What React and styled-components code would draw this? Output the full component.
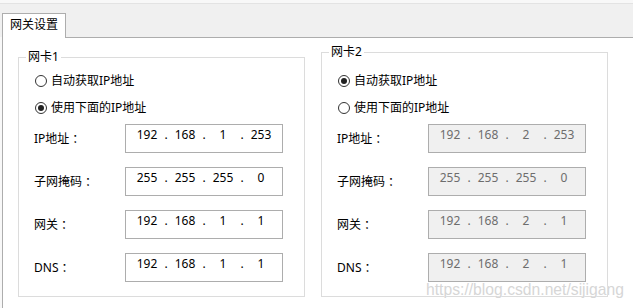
import React from 'react'
import styled, { createGlobalStyle } from 'styled-components'

const GlobalStyle = createGlobalStyle`
    body {
        margin: 0;
        background: #fff;
        font-family: "Noto Sans", "Noto Sans CJK SC", sans-serif;
        font-size: 12px;
        color: #000;
    }
`

const Window = styled.div`
    position: relative;
    width: 633px;
    height: 308px;
    overflow: hidden;
    background: #f8f8f8;
    padding-top: 3px;
    box-sizing: border-box;
    display: flex;
    flex-direction: column;
`

const TabStrip = styled.div`
    height: 34px;
    box-sizing: border-box;
    border-top: 1px solid #e3e3e3;
    background: #f0f0f0;
    display: flex;
    align-items: flex-end;
    padding-left: 2px;
`

const Tab = styled.div`
    position: relative;
    z-index: 1;
    width: 64px;
    height: 25px;
    margin-bottom: -1px;
    box-sizing: border-box;
    border: 1px solid #adadad;
    border-bottom: none;
    background: #fff;
    padding: 3px 0 0 7px;
    line-height: 16px;
`

const Page = styled.div`
    flex: 1;
    margin-left: 2px;
    border-top: 1px solid #adadad;
    border-left: 1px solid #adadad;
    background: #fff;
    display: flex;
    align-items: flex-start;
    gap: 16px;
    padding-left: 15px;
`

const GroupBox = styled.div`
    position: relative;
    width: 287px;
    box-sizing: border-box;
    margin-top: ${p => p.$top}px;
    padding: ${p => p.$padTop}px 0 14px 0;
    border: 1px solid #dcdcdc;
`

const Legend = styled.span`
    position: absolute;
    top: -9px;
    left: 7px;
    padding: 0 2px;
    background: #fff;
    line-height: 16px;
`

const RadioRow = styled.label`
    height: 27px;
    display: flex;
    align-items: center;
    gap: 4px;
    padding-left: 16px;
    line-height: 16px;
`

const RadioMark = styled.span`
    position: relative;
    width: 12px;
    height: 12px;
    box-sizing: border-box;
    border: 1px solid #333;
    border-radius: 50%;
    background: #fff;

    &::after {
        content: '';
        display: ${p => (p.$checked ? 'block' : 'none')};
        position: absolute;
        left: 2px;
        top: 2px;
        width: 6px;
        height: 6px;
        border-radius: 50%;
        background: #222;
    }
`

const Fields = styled.div`
    margin-top: 3px;
    display: flex;
    flex-direction: column;
    gap: 14px;
`

const FieldRow = styled.div`
    display: flex;
    align-items: center;
    padding-left: 15px;
`

const FieldLabel = styled.span`
    width: 91px;
    line-height: 16px;
    margin-top: 1px;
`

const Colon = styled.span`
    margin-left: 3px;
`

const IpBox = styled.div`
    width: 158px;
    height: 29px;
    box-sizing: border-box;
    border: 1px solid #adadad;
    background: ${p => (p.$disabled ? '#f0f0f0' : '#fff')};
    color: ${p => (p.$disabled ? '#6d6d6d' : '#000')};
    display: flex;
    align-items: flex-start;
    padding: 2px 0 0 5px;
    line-height: 16px;
`

const Octet = styled.span`
    width: 32px;
    text-align: center;
`

const Dot = styled.span`
    width: 6px;
    text-align: center;
`

const Watermark = styled.div`
    position: absolute;
    right: 9px;
    bottom: 9px;
    font-family: "Liberation Sans", Arial, sans-serif;
    font-size: 15.7px;
    line-height: 18px;
    color: #d6d6d6;
    text-shadow: 0 0 1px #fff;
    pointer-events: none;
`

function IpField({ value, disabled }) {
    const parts = value.split('.')
    return (
        <IpBox $disabled={disabled}>
            {parts.map((p, i) => (
                <React.Fragment key={i}>
                    <Octet>{p}</Octet>
                    {i < 3 && <Dot>.</Dot>}
                </React.Fragment>
            ))}
        </IpBox>
    )
}

const cards = [
    {
        title: '网卡1',
        top: 19,
        padTop: 9,
        auto: false,
        ip: ['192.168.1.253', '255.255.255.0', '192.168.1.1', '192.168.1.1'],
    },
    {
        title: '网卡2',
        top: 14,
        padTop: 14,
        auto: true,
        ip: ['192.168.2.253', '255.255.255.0', '192.168.2.1', '192.168.2.1'],
    },
]

const labels = ['IP地址', '子网掩码', '网关', 'DNS']

function App() {
    return (
        <>
            <GlobalStyle />
            <Window>
                <TabStrip>
                    <Tab>网关设置</Tab>
                </TabStrip>
                <Page>
                    {cards.map(card => (
                        <GroupBox key={card.title} $top={card.top} $padTop={card.padTop}>
                            <Legend>{card.title}</Legend>
                            <RadioRow>
                                <RadioMark $checked={card.auto} />
                                自动获取IP地址
                            </RadioRow>
                            <RadioRow>
                                <RadioMark $checked={!card.auto} />
                                使用下面的IP地址
                            </RadioRow>
                            <Fields>
                                {labels.map((l, i) => (
                                    <FieldRow key={l}>
                                        <FieldLabel>
                                            {l}
                                            <Colon>：</Colon>
                                        </FieldLabel>
                                        <IpField value={card.ip[i]} disabled={card.auto} />
                                    </FieldRow>
                                ))}
                            </Fields>
                        </GroupBox>
                    ))}
                </Page>
                <Watermark>https://blog.csdn.net/sijigang</Watermark>
            </Window>
        </>
    )
}

export default App
